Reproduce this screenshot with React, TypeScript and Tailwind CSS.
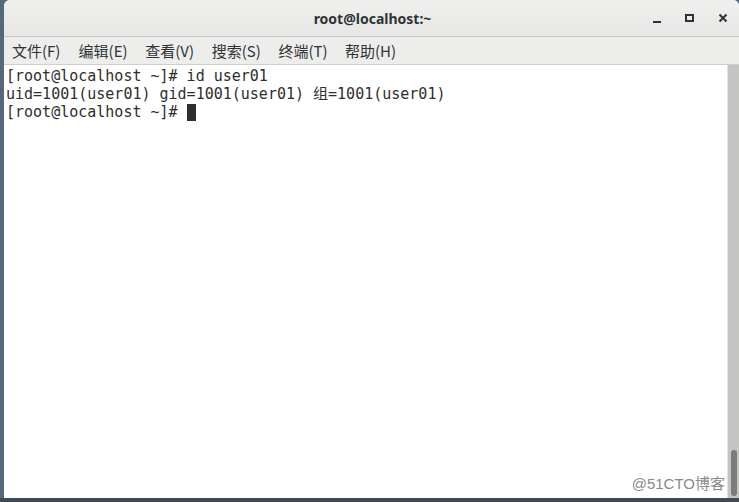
import React from 'react';

export default function App() {
  const menus = ['文件(F)', '编辑(E)', '查看(V)', '搜索(S)', '终端(T)', '帮助(H)'];
  const mono = { fontFamily: '"DejaVu Sans Mono", "Noto Sans CJK SC", monospace' };

  return (
    <div className="w-[739px] h-[502px] bg-[#55697b] overflow-hidden flex flex-col">
      <div className="flex-1 min-h-0 ml-[4px] flex flex-col rounded-t-[6px] overflow-hidden bg-white">
        {/* title bar */}
        <div className="h-[37px] shrink-0 bg-gradient-to-b from-[#f0f0ef] to-[#e6e6e5] border-b border-[#c6c6c4] flex items-center relative">
          <div className="flex-1 text-center text-[14px] font-bold text-[#2e3436] pl-[2px]" style={{ fontFamily: '"Noto Sans", "Liberation Sans", sans-serif' }}>
            root@localhost:~
          </div>
          <div className="absolute right-0 top-0 h-full flex items-center">
            <div className="w-[33px] flex justify-center">
              <div className="w-[8px] h-[2px] bg-[#2e3436] mt-[7px]" />
            </div>
            <div className="w-[33px] flex justify-center">
              <div className="w-[9px] h-[8px] border-[2px] border-[#2e3436]" />
            </div>
            <div className="w-[33px] flex justify-center">
              <svg width="10" height="10" viewBox="0 0 10 10">
                <path d="M1.5 1.5 L8.5 8.5 M8.5 1.5 L1.5 8.5" stroke="#2e3436" strokeWidth="2" />
              </svg>
            </div>
          </div>
        </div>
        {/* menu bar */}
        <div className="h-[28px] shrink-0 bg-[#ededec] border-b border-[#cfcfcd] flex items-center pl-[8px]" style={{ fontFamily: '"Noto Sans CJK SC", "Noto Sans", sans-serif' }}>
          {menus.map((m) => (
            <div key={m} className="w-[66.6px] text-[15px] text-[#2e3436] leading-none">
              {m}
            </div>
          ))}
        </div>
        {/* terminal */}
        <div className="flex-1 min-h-0 flex">
          <div className="flex-1 pl-[2px] pt-[2px] text-[15px] leading-[18px] text-[#2e2e2e] relative" style={mono}>
            <div className="whitespace-pre">[root@localhost ~]# id user01</div>
            <div className="whitespace-pre">uid=1001(user01) gid=1001(user01) 组=1001(user01)</div>
            <div className="whitespace-pre flex items-center">
              [root@localhost ~]# <span className="inline-block w-[9px] h-[17px] bg-[#2e2e2e]" />
            </div>
            <div className="absolute right-[2px] bottom-[5px] text-[15px] text-[#8a8a8a]" style={{ fontFamily: '"Liberation Sans", "Noto Sans CJK SC", sans-serif' }}>
              @51CTO博客
            </div>
          </div>
          <div className="w-[12px] shrink-0 bg-[#c4c4c3] border-l border-[#e2e2e2] flex flex-col justify-end items-center pb-[2px]">
            <div className="w-[6px] h-[46px] rounded-full bg-[#7b7b7b]" />
          </div>
        </div>
      </div>
      <div className="h-[4px] shrink-0 bg-[#3e4a55]" />
    </div>
  );
}
